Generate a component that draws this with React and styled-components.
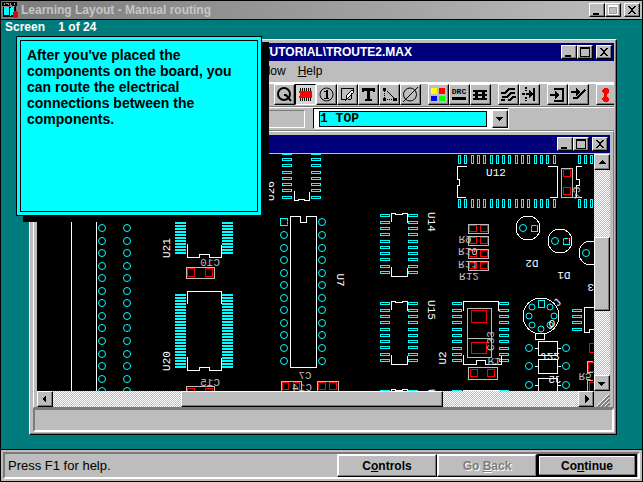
import React from "react";
import styled, { createGlobalStyle, css } from "styled-components";

const GlobalStyle = createGlobalStyle`
  * {
    box-sizing: border-box;
  }
  body {
    margin: 0;
    font-family: "Liberation Sans", Arial, sans-serif;
    font-size: 13px;
    color: black;
  }
`;

const raised = css`
  border: 1px solid;
  border-color: white black black white;
  box-shadow: inset -1px -1px #7b7b7b;
`;

const Screen = styled.div`
  height: 100vh;
  display: flex;
  flex-direction: column;
  position: relative;
  border: 1px solid black;
  background-color: #007b7b;
`;

const AppTitle = styled.header`
  height: 19px;
  display: flex;
  align-items: center;
  padding: 0 2px 0 1px;
  border-bottom: 1px solid black;
  background-image: linear-gradient(to right, #7b7b7b, #bdbdbd);
`;

const AppName = styled.h1`
  flex: 1;
  margin: 0 0 0 3px;
  font-size: 12px;
  line-height: 16px;
  color: #c6c6c6;
`;

const Controls = styled.div`
  display: flex;
`;

const WindowButton = styled.button`
  width: 16px;
  height: 14px;
  padding: 0;
  margin-left: ${props => (props.$apart ? "3px" : "0")};
  background-color: #bdbdbd;
  ${raised}

  svg {
    display: block;
  }
`;

const Counter = styled.p`
  margin: 0;
  padding-left: 4px;
  height: 19px;
  font-size: 12px;
  font-weight: bold;
  line-height: 15px;
  color: white;
  white-space: pre;
`;

const Desktop = styled.main`
  flex: 1;
  min-height: 0;
  display: flex;
  padding: 0 25px 14px 28px;
`;

const Card = styled.section`
  position: absolute;
  top: 35px;
  left: 15px;
  width: 246px;
  height: 180px;
  padding: 3px;
  border: 1px solid black;
  background-color: cyan;
  box-shadow: 7px 6px black;
`;

const CardText = styled.p`
  height: 100%;
  margin: 0;
  padding: 6px;
  border: 1px solid black;
  font-size: 14px;
  font-weight: bold;
  line-height: 16px;
`;

const Window = styled.section`
  flex: 1;
  min-width: 0;
  display: flex;
  flex-direction: column;
  padding: 3px 2px 2px 3px;
  border: 1px solid;
  border-color: white black black white;
  background-color: #bdbdbd;
  box-shadow: inset -1px -1px #7b7b7b;
`;

const WindowTitle = styled.div`
  height: 18px;
  display: flex;
  justify-content: space-between;
  align-items: center;
  padding-right: 2px;
  background-color: #00007b;
`;

const WindowName = styled.h2`
  width: 379px;
  margin: 0;
  font-size: 12px;
  line-height: 16px;
  text-align: right;
  color: white;
`;

const Menu = styled.nav`
  height: 21px;
  display: flex;
  gap: 12px;
  padding-left: 210px;
  line-height: 20px;
  font-size: 12px;
`;

const MenuItem = styled.a`
  color: black;
  text-decoration: none;
`;

const Toolbar = styled.div`
  height: 25px;
  display: flex;
  gap: 7px;
  padding-left: 241px;
  overflow: hidden;
  border-top: 2px solid white;
  border-bottom: 1px solid #7b7b7b;
`;

const ToolGroup = styled.div`
  display: flex;
`;

const Tool = styled.button`
  flex: none;
  width: 21px;
  height: 21px;
  padding: 0;
  border: 1px solid;
  border-color: ${props =>
    props.$pressed ? "black white white black" : "white black black white"};
  background-color: ${props => (props.$pressed ? "#d6d6d6" : "#bdbdbd")};
  box-shadow: ${props => (props.$pressed ? "none" : "inset -1px -1px #7b7b7b")};

  svg {
    display: block;
  }
`;

const Options = styled.div`
  height: 24px;
  display: flex;
  gap: 8px;
  border-top: 1px solid white;
  border-bottom: 1px solid #7b7b7b;
`;

const Coordinates = styled.div`
  width: 272px;
  height: 18px;
  margin-top: 2px;
  border: 1px solid;
  border-color: #7b7b7b white white #7b7b7b;
`;

const LayerBox = styled.div`
  width: 196px;
  height: 21px;
  display: flex;
  align-items: center;
  justify-content: space-between;
  padding-left: 5px;
  border: 1px solid;
  border-color: black white white black;
  background-color: white;
`;

const LayerSelect = styled.select`
  appearance: none;
  width: 168px;
  height: 16px;
  padding: 0;
  border: 1px solid black;
  border-radius: 0;
  background-color: cyan;
  color: black;
  font-family: "Liberation Mono", monospace;
  font-size: 13px;
  font-weight: bold;
  line-height: 14px;
`;

const ArrowBox = styled.span`
  width: 16px;
  height: 18px;
  background-color: #bdbdbd;
  ${raised}

  svg {
    display: block;
  }
`;

const BoardWindow = styled.section`
  flex: 1;
  min-height: 0;
  display: flex;
  flex-direction: column;
  padding: 3px 3px 0 3px;
  border: 1px solid;
  border-color: white #7b7b7b #7b7b7b white;
`;

const BoardTitle = styled.div`
  height: 19px;
  display: flex;
  justify-content: flex-end;
  align-items: center;
  padding-right: 2px;
  border-bottom: 1px solid #bdbdbd;
  background-color: #00007b;
`;

const BoardArea = styled.div`
  flex: 1;
  min-height: 0;
  display: grid;
  grid-template-columns: 1fr 16px;
  grid-template-rows: 1fr 16px;
`;

const BoardCanvas = styled.svg`
  width: 100%;
  height: 100%;
  min-height: 0;
  display: block;
  overflow: hidden;
  background-color: black;
`;

const ScrollBar = styled.div`
  min-height: 0;
  display: grid;
  grid-template: ${props =>
    props.$vertical
      ? "16px 67fr 74fr 64fr 16px / 16px"
      : "16px / 16px 128fr 261fr 135fr 16px"};
  background: repeating-conic-gradient(#bdbdbd 0 25%, white 0 50%) 0 0 / 2px 2px;
`;

const ScrollButton = styled.button`
  padding: 0;
  background-color: #bdbdbd;
  ${raised}

  svg {
    display: block;
  }
`;

const Thumb = styled.div`
  grid-area: ${props => (props.$vertical ? "3 / 1" : "1 / 3")};
  background-color: #bdbdbd;
  ${raised}
`;

const Status = styled.div`
  height: 24px;
  border: 2px solid;
  border-color: #7b7b7b white white #7b7b7b;
`;

const Footer = styled.footer`
  height: 32px;
  padding: 2px;
  border-top: 1px solid black;
  background-color: #bdbdbd;
`;

const FooterPanel = styled.div`
  height: 27px;
  display: flex;
  padding-right: 1px;
  border: 2px solid;
  border-color: #7b7b7b white white #7b7b7b;
`;

const Hint = styled.span`
  flex: 1;
  padding-left: 3px;
  line-height: 23px;
`;

const FooterButton = styled.button`
  width: 100px;
  padding: 0;
  border: ${props => (props.$primary ? "2px" : "1px")} solid;
  border-color: ${props =>
    props.$primary ? "black" : "white black black white"};
  background-color: #bdbdbd;
  box-shadow: inset -1px -1px #7b7b7b, inset 1px 1px white;
  color: black;
  font-family: inherit;
  font-size: 12px;
  font-weight: bold;
  line-height: 18px;

  &:disabled {
    color: #7b7b7b;
    text-shadow: 1px 1px white;
  }
`;

const MinimizeIcon = () => (
  <svg width="14" height="12" shapeRendering="crispEdges">
    <path d="M3 9h6v2h-6z" />
  </svg>
);

const MaximizeIcon = ({ dim }) => (
  <svg width="14" height="12" shapeRendering="crispEdges">
    <path
      d="M2 1h10v10H2zM3 3v7h8V3z"
      fillRule="evenodd"
      fill={dim ? "white" : "black"}
    />
    {dim && <path d="M3.5 3.500h7v6h-7z" fill="none" stroke="#9c9c9c" />}
  </svg>
);

const CloseIcon = () => (
  <svg width="14" height="12" shapeRendering="crispEdges">
    <path d="M3 2h2v1h1v1h2V3h1V2h2v1h-1v1H9v1H8v2h1v1h1v1h1v1H9V9H8V8H6v1H5v1H3V9h1V8h1V7h1V5H5V4H4V3H3z" />
  </svg>
);

const WindowControls = ({ dim }) => (
  <Controls>
    <WindowButton aria-label="Minimize">
      <MinimizeIcon />
    </WindowButton>
    <WindowButton aria-label="Maximize" disabled={dim}>
      <MaximizeIcon dim={dim} />
    </WindowButton>
    <WindowButton aria-label="Close" $apart>
      <CloseIcon />
    </WindowButton>
  </Controls>
);

const arrows = {
  up: "M7 5l4 4H3z",
  down: "M3 6h7l-3.500 4z",
  left: "M4 7l4-4v8z",
  right: "M10 7l-4-4v8z"
};

const Arrow = ({ to }) => (
  <svg width="14" height="14" shapeRendering="crispEdges">
    <path d={arrows[to]} />
  </svg>
);

const AppIcon = () => (
  <svg width="16" height="16" shapeRendering="crispEdges">
    <path d="M0 0h15v4H0z" />
    <path d="M2 1v2M4 1h2v2M8 1v2h2M12 1v2" stroke="#9c9c9c" fill="none" />
    <path d="M1 5h13v10H1z" fill="black" />
    <path d="M2 5h4l1 1v8l-1-1H2zM12 5H9L8 6v8l1-1h3z" fill="cyan" />
    <path d="M12 9h3l1 2v3l-1 2h-3l-1-2v-3z" fill="#ef0000" />
    <path d="M13 8l1-4" stroke="black" />
  </svg>
);

const Glyph = ({ children }) => (
  <svg width="19" height="19" shapeRendering="crispEdges" fill="none" stroke="black">
    {children}
  </svg>
);

const tools = [
  [
    {
      name: "Query",
      icon: (
        <g strokeWidth="2" shapeRendering="auto">
          <circle cx="9" cy="9" r="6" />
          <path d="M9 10h2l5 6" />
        </g>
      )
    },
    {
      name: "Component",
      pressed: true,
      icon: (
        <>
          <path d="M3 6h13v7H3v-2h1V8H3z" fill="red" stroke="none" />
          <path d="M4.500 3v3M6.500 3v3M8.500 3v3M10.500 3v3M12.500 3v3M14.500 3v3M4.500 13v3M6.500 13v3M8.500 13v3M10.500 13v3M12.500 13v3M14.500 13v3" />
        </>
      )
    },
    {
      name: "Pin",
      icon: (
        <>
          <circle cx="9.500" cy="9.500" r="6.500" shapeRendering="auto" />
          <path d="M7 6.500h2M7 13.500h5" />
          <path d="M10 5v8" strokeWidth="2" />
        </>
      )
    },
    {
      name: "Obstacle",
      icon: (
        <>
          <path d="M8 14.500H3.500V3.500H15.500V6" />
          <path d="M8 15l1-5 5-5 2 2-5 5z" fill="white" />
          <path d="M13 8v6l-3 1" />
        </>
      )
    },
    {
      name: "Text",
      icon: (
        <path
          d="M3 3h13v4h-2V6h-3v8h2v2H6v-2h2V6H5v1H3z"
          fill="black"
          stroke="none"
        />
      )
    },
    {
      name: "Connection",
      icon: (
        <>
          <path d="M4.500 4v11M5 14.500h10" strokeDasharray="1 1" />
          <path d="M5 4l10 10" strokeDasharray="2 1" />
          <path d="M3 3h3v3H3zM3 13h3v3H3zM13 13h4v3h-4z" fill="black" stroke="none" />
        </>
      )
    },
    {
      name: "Error",
      icon: (
        <g shapeRendering="auto">
          <circle cx="9" cy="9.500" r="6.500" />
          <path d="M2 17L17 2" />
        </g>
      )
    }
  ],
  [
    {
      name: "Color",
      icon: (
        <g stroke="none">
          <path d="M2 3h6v6H2z" fill="yellow" />
          <path d="M10 3h6v6h-6z" fill="red" />
          <path d="M2 11h6v5H2z" fill="blue" />
          <path d="M10 11h6v5h-6z" fill="lime" />
        </g>
      )
    },
    {
      name: "Online DRC",
      icon: (
        <>
          <text
            x="9"
            y="9"
            fill="black"
            stroke="none"
            textAnchor="middle"
            fontFamily="Liberation Mono, monospace"
            fontSize="8"
            fontWeight="bold"
          >
            DRC
          </text>
          <path d="M2 13.500h14" strokeWidth="3" />
        </>
      )
    },
    {
      name: "Reconnect",
      icon: (
        <>
          <path d="M2 6h14M2 10h14M2 14h14" strokeWidth="2" />
          <path d="M5.500 5v10M12.500 5v10" strokeWidth="3" />
        </>
      )
    }
  ],
  [
    {
      name: "Auto path route",
      icon: (
        <g strokeWidth="2">
          <path d="M2 8h4l4-4h6M3 12h5l4-4h4M9 15h2l3-3h3M2 15h4" />
        </g>
      )
    },
    {
      name: "Shove track",
      icon: (
        <>
          <path d="M5.500 2v4M5.500 12v4" strokeDasharray="2 1" strokeWidth="2" />
          <path d="M2 9h9" strokeDasharray="3 1" strokeWidth="2" />
          <path d="M9 5l4 4-4 4z" fill="black" stroke="none" />
          <path d="M14 3v13" strokeWidth="2" />
        </>
      )
    }
  ],
  [
    {
      name: "Edit segment",
      icon: (
        <>
          <path d="M6 4h9v12H6" strokeWidth="2" />
          <path d="M2 10h6" strokeWidth="2" />
          <path d="M7 6l4 4-4 4z" fill="black" stroke="none" />
        </>
      )
    },
    {
      name: "Add route",
      icon: (
        <>
          <path d="M2 7h7M4 13h4l8-8" strokeWidth="2" />
          <path d="M7 3l5 4-5 4z" fill="black" stroke="none" />
        </>
      )
    }
  ],
  [
    {
      name: "Design check",
      icon: (
        <path
          d="M7 3h3l2 2v2l-2 2v3l2 1v2l-2 2H7l-2-2v-2l2-1V9L5 7V5z"
          fill="red"
          stroke="none"
        />
      )
    }
  ]
];

const cyanPin = { fill: "none", stroke: "cyan" };

const range = count => Array.from({ length: count }, (_, i) => i);

const Hole = ({ x, y }) => (
  <circle cx={x} cy={y} r="3.500" shapeRendering="auto" {...cyanPin} />
);

const Holes = ({ x, y, count }) =>
  range(count).map(i => <Hole key={i} x={x} y={Math.round(y + i * 12.55)} />);

// outlined pads, two columns
const Pads = ({ left, right, rows }) =>
  rows.map(y => (
    <path
      key={y}
      d={`M${left}.5 ${y}.5h9v2h-9zM${right}.5 ${y}.5h9v2h-9z`}
      {...cyanPin}
    />
  ));

// fine-pitch pads, drawn solid
const FinePads = ({ y, count }) =>
  range(count).map(i => (
    <path
      key={i}
      d={`M175 ${y + i * 3}h11v2h-11zM222 ${y + i * 3}h11v2h-11z`}
      fill="cyan"
      stroke="none"
    />
  ));

const Part = ({ x, y, w, h, pads }) => (
  <>
    <rect x={x + 0.5} y={y + 0.5} width={w} height={h} fill="none" stroke="#bdbdbd" />
    {pads.map(([px, py, pw, ph]) => (
      <rect
        key={`${px}-${py}`}
        x={px + 0.5}
        y={py + 0.5}
        width={pw}
        height={ph}
        fill="none"
        stroke="red"
      />
    ))}
  </>
);

const Mark = ({ x, y, turn = "", dim, children }) => (
  <text
    y="4"
    transform={`translate(${x} ${y}) ${turn}`}
    fill={dim ? "#bdbdbd" : "white"}
    textAnchor="middle"
  >
    {children}
  </text>
);

const mirror = "scale(-1 1)";
const flip = "scale(1 -1)";
const soicRows = [0, 7, 13, 19, 26, 32, 38, 44, 51, 57];

const Soic = ({ y }) => (
  <>
    <Pads left={380} right={408} rows={soicRows.map(row => y + row)} />
    <path d={`M391.5 ${y + 8}v-8.500h4v1h7v-1h5v9M391.5 ${y + 53}v9.500h16v-9`} />
  </>
);

const Board = () => (
  <BoardCanvas role="img" aria-label="Circuit board layout">
    <g
      transform="translate(-37 -154)"
      shapeRendering="crispEdges"
      fill="none"
      stroke="white"
    >
      <path d="M71.5 154v300M96.500 154v300" />
      <Holes x={102} y={228} count={14} />
      <Holes x={127} y={228} count={14} />

      <FinePads y={222} count={11} />
      <path d="M187.5 244v13.500h12v-3h10v3h12V245" />
      <FinePads y={294} count={25} />
      <path d="M187.5 304v-12.500h34V304M187.5 357v13.500h12v-3h10v3h12V358" />
      <Part x={186} y={267} w={28} h={11} pads={[[187, 268, 7, 8], [205, 268, 7, 8]]} />
      <Part x={186} y={386} w={28} h={11} pads={[[187, 388, 7, 8], [205, 388, 7, 8]]} />

      <Pads left={282} right={311} rows={[152, 158, 164, 171, 177, 183, 189, 196]} />
      <path d="M294.5 191v9.500h4v-1h6v1h5V192" />
      <path d="M290.5 216.500h10v6h6v-6h10v151h-26z" />
      <rect x="280.500" y="218.500" width="7" height="7" stroke="cyan" />
      <path d="M285 219.500h2v6" stroke="red" strokeDasharray="1 2" />
      <Hole x={322} y={222} />
      <Holes x={284} y={235} count={11} />
      <Holes x={322} y={235} count={11} />
      <Part x={281} y={381} w={20} h={12} pads={[[282, 382, 6, 7], [293, 382, 6, 7]]} />
      <Part x={317} y={381} w={21} h={12} pads={[[318, 382, 7, 7], [329, 382, 7, 7]]} />

      <Soic y={214} />
      <Soic y={302} />
      <Soic y={390} />

      {range(16).map(i => {
        const x = 458.5 + Math.round(i * 6.3);
        return <path key={i} d={`M${x} 155.500h2v8h-2zM${x} 199.500h2v8h-2z`} {...cyanPin} />;
      })}
      {[578, 584, 590].map(x => (
        <path key={x} d={`M${x}.5 155.500h2v8h-2zM${x}.5 199.500h2v8h-2z`} {...cyanPin} />
      ))}
      <path d="M467 166.500h-9.500v13h2v6h-2v12h8M548 166.500h9.500v31h-8" />
      <path d="M582 166.500h-5.500v13h3v6h-3v12h5" />
      <Part x={561} y={168} w={11} h={29} pads={[[563, 169, 7, 7], [563, 187, 7, 7]]} />

      {[224, 236, 249, 261].map(y => (
        <Part
          key={y}
          x={468}
          y={y}
          w={20}
          h={9}
          pads={[[469, y + 1, 7, 6], [480, y + 1, 7, 6]]}
        />
      ))}

      {[[528, 228], [560, 241], [591, 253]].map(([x, y]) => (
        <g key={x}>
          <circle cx={x} cy={y} r="12" />
          <Hole x={x - 5} y={y} />
          <path d={`M${x + 3}.5 ${y - 3}.5h6v6h-6z`} stroke="cyan" />
          <path d={`M${x + 3}.5 ${y - 3}v4M${x + 8}.5 ${y - 3}v2`} stroke="red" strokeDasharray="1 2" />
        </g>
      ))}

      <Pads left={452} right={499} rows={[302, 309, 315, 321, 328, 334, 340, 347, 353, 359]} />
      <path d="M463.5 311v-9.500h35v9M463.5 355v9.500h13v-4h9v4h16v-9" />
      <Part x={467} y={308} w={24} h={49} pads={[[471, 310, 15, 12], [471, 342, 15, 11]]} />
      <path d="M467 338.500h24" stroke="#bdbdbd" />
      <Part x={468} y={367} w={29} h={12} pads={[[470, 369, 7, 7], [487, 369, 7, 7]]} />
      <path d="M463 390.500h36" />
      <path d="M452 390.500h10M499 390.500h10" stroke="cyan" />

      <circle cx="541" cy="316" r="18" />
      <path d="M538.5 300.500h6v7h-6z" stroke="cyan" />
      {[[532, 307], [550, 307], [529, 316], [554, 316], [532, 325], [541, 329], [550, 325]].map(
        ([x, y]) => (
          <circle
            key={`${x}-${y}`}
            cx={x}
            cy={y}
            r="3"
            stroke="cyan"
            shapeRendering="auto"
          />
        )
      )}
      <path d="M535.5 334v5.500h9V334" />
      {[341, 359, 378].map(y => (
        <g key={y}>
          <path d={`M538.5 ${y}.5h19v14h-19zM535 ${y + 7}.5h3M558 ${y + 7}.5h3`} />
          <Hole x={529} y={y + 7} />
          <Hole x={566} y={y + 7} />
        </g>
      ))}
      <Pads left={572} right={620} rows={[309, 315, 321, 328]} />
      <path d="M594 307.500h-9.500v25h5v-3h4" />
      <path d="M589 343.500h6M589.5 343v9M589 352.500h6M588.500 362v9M588 362.500h6M588 371.500h6M589.5 382v9M590 382.500h4" stroke="red" />
      <path d="M593 361.500h-5.500v11h5M593 380.500h-5.500v11" stroke="#bdbdbd" />
    </g>

    <g
      transform="translate(-37 -154)"
      fontFamily="Liberation Mono, monospace"
      fontSize="11"
    >
      <Mark x={166} y={248} turn="rotate(-90)">U21</Mark>
      <Mark x={166} y={361} turn="rotate(-90)">U20</Mark>
      <Mark x={210} y={262} turn={mirror} dim>C10</Mark>
      <Mark x={210} y={382} turn={mirror} dim>C15</Mark>
      <Mark x={270} y={191} turn="rotate(-90)">U26</Mark>
      <Mark x={341} y={280} turn="rotate(90)">U7</Mark>
      <Mark x={305} y={375} turn={mirror} dim>C7</Mark>
      <Mark x={302} y={387} turn={mirror} dim>C14</Mark>
      <Mark x={432} y={222} turn="rotate(90)">U14</Mark>
      <Mark x={432} y={310} turn="rotate(90)">U15</Mark>
      <Mark x={432} y={399} turn="rotate(90)">U16</Mark>
      <Mark x={442} y={358} turn="rotate(-90)">U2</Mark>
      <Mark x={496} y={172}>U12</Mark>
      <Mark x={577} y={193} turn="rotate(90)" dim>C4</Mark>
      <Mark x={465} y={240} turn={flip} dim>R9</Mark>
      <Mark x={468} y={252} turn={flip} dim>R10</Mark>
      <Mark x={468} y={265} turn={flip} dim>R11</Mark>
      <Mark x={469} y={277} turn={flip} dim>R12</Mark>
      <Mark x={532} y={264} turn="rotate(180)">D2</Mark>
      <Mark x={564} y={276} turn="rotate(180)">D1</Mark>
      <Mark x={594} y={288} turn="rotate(180)">D3</Mark>
      <Mark x={490} y={341} turn="rotate(-90)" dim>C33</Mark>
      <Mark x={494} y={362} turn={flip} dim>R1</Mark>
      <Mark x={557} y={302} turn="rotate(-45)">J</Mark>
      <Mark x={552} y={323} turn={mirror}>Q</Mark>
      <Mark x={550} y={357} turn={flip}>J22</Mark>
      <Mark x={555} y={379} turn={mirror}>J5</Mark>
      <Mark x={585} y={377} turn={flip} dim>R5</Mark>
    </g>
  </BoardCanvas>
);

const App = () => (
  <>
    <GlobalStyle />
    <Screen>
      <AppTitle>
        <AppIcon />
        <AppName>Learning Layout - Manual routing</AppName>
        <WindowControls dim />
      </AppTitle>
      <Counter>{"Screen    1 of 24"}</Counter>
      <Desktop>
        <Window>
          <WindowTitle>
            <WindowName>TUTORIAL\TROUTE2.MAX</WindowName>
            <WindowControls />
          </WindowTitle>
          <Menu>
            <MenuItem href="#window">Window</MenuItem>
            <MenuItem href="#help">
              <u>H</u>elp
            </MenuItem>
          </Menu>
          <Toolbar>
            {tools.map((group, index) => (
              <ToolGroup key={index}>
                {group.map(tool => (
                  <Tool key={tool.name} aria-label={tool.name} $pressed={tool.pressed}>
                    <Glyph>{tool.icon}</Glyph>
                  </Tool>
                ))}
              </ToolGroup>
            ))}
          </Toolbar>
          <Options>
            <Coordinates />
            <LayerBox>
              <LayerSelect aria-label="Layer">
                <option>1 TOP</option>
              </LayerSelect>
              <ArrowBox>
                <Arrow to="down" />
              </ArrowBox>
            </LayerBox>
          </Options>
          <BoardWindow>
            <BoardTitle>
              <WindowControls />
            </BoardTitle>
            <BoardArea>
              <Board />
              <ScrollBar $vertical>
                <ScrollButton aria-label="Scroll up">
                  <Arrow to="up" />
                </ScrollButton>
                <Thumb $vertical />
                <ScrollButton aria-label="Scroll down" style={{ gridRow: 5 }}>
                  <Arrow to="down" />
                </ScrollButton>
              </ScrollBar>
              <ScrollBar>
                <ScrollButton aria-label="Scroll left">
                  <Arrow to="left" />
                </ScrollButton>
                <Thumb />
                <ScrollButton aria-label="Scroll right" style={{ gridColumn: 5 }}>
                  <Arrow to="right" />
                </ScrollButton>
              </ScrollBar>
              <svg width="16" height="16" stroke="#7b7b7b" strokeWidth="2">
                <path d="M4 16L16 4M8 16l8-8M12 16l4-4" />
                <path d="M3 15L15 3M7 15l8-8M11 15l4-4" stroke="white" strokeWidth="1" />
              </svg>
            </BoardArea>
          </BoardWindow>
          <Status />
        </Window>
      </Desktop>
      <Card>
        <CardText>
          After you've placed the components on the board, you can route the
          electrical connections between the components.
        </CardText>
      </Card>
      <Footer>
        <FooterPanel>
          <Hint>Press F1 for help.</Hint>
          <FooterButton>
            C<u>o</u>ntrols
          </FooterButton>
          <FooterButton disabled>
            Go <u>B</u>ack
          </FooterButton>
          <FooterButton $primary>
            Co<u>n</u>tinue
          </FooterButton>
        </FooterPanel>
      </Footer>
    </Screen>
  </>
);

export default App;
